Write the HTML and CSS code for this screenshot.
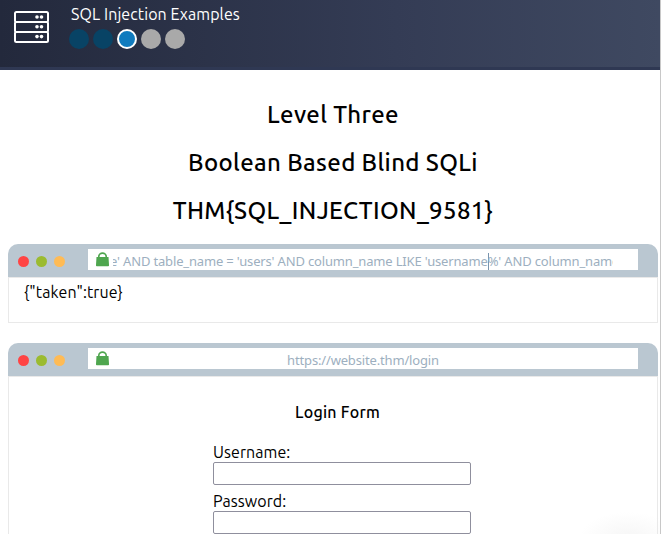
FILE: index.html
```html
<!DOCTYPE html>
<html lang="en">
<head>
<meta charset="utf-8">
<title>SQL Injection Examples</title>
<link rel="stylesheet" href="styles.css">
</head>
<body>
<div class="page">
  <header class="header">
    <svg class="server" width="36" height="34" viewBox="0 0 36 34" fill="none" stroke="#fff" stroke-width="2">
      <rect x="1" y="2" width="33" height="10" rx="1.5"/>
      <rect x="1" y="12" width="33" height="10" rx="1.5"/>
      <rect x="1" y="22" width="33" height="10" rx="1.5"/>
      <g fill="#fff" stroke="none">
        <circle cx="23" cy="7" r="1.8"/><circle cx="27.5" cy="7" r="1.8"/>
        <circle cx="23" cy="16.7" r="1.8"/><circle cx="27.5" cy="16.7" r="1.8"/>
        <circle cx="23" cy="26.6" r="1.8"/><circle cx="27.5" cy="26.6" r="1.8"/>
      </g>
    </svg>
    <div class="progress">
      <div class="title">SQL Injection Examples</div>
      <div class="steps">
        <i class="step done"></i><i class="step done"></i><i class="step current"></i><i class="step"></i><i class="step"></i>
      </div>
    </div>
  </header>
  <main class="main">
    <h1 class="level">Level Three</h1>
    <h1 class="level">Boolean Based Blind SQLi</h1>
    <h1 class="level">THM{SQL_INJECTION_9581}</h1>
    <section class="browser">
      <div class="bar">
        <i class="dot red"></i><i class="dot green"></i><i class="dot amber"></i>
        <div class="address">
          <svg class="lock" width="13" height="15" viewBox="0 0 13 15"><path d="M2.8 6V4.4a3.7 3.3 0 0 1 7.4 0V6" fill="none" stroke="#4fa64f" stroke-width="1.6"/><path d="M.5 5h12l.5 8.5q0 .8-.8.8H.8q-.8 0-.8-.8z" fill="#4fa64f"/></svg>
          <div class="url scrolled"><span class="query">e' AND table_name = 'users' AND column_name LIKE 'username<i class="caret"></i>%' AND column_name</span></div>
        </div>
      </div>
      <div class="body result">{"taken":true}</div>
    </section>
    <section class="browser">
      <div class="bar">
        <i class="dot red"></i><i class="dot green"></i><i class="dot amber"></i>
        <div class="address">
          <svg class="lock" width="13" height="15" viewBox="0 0 13 15"><path d="M2.8 6V4.4a3.7 3.3 0 0 1 7.4 0V6" fill="none" stroke="#4fa64f" stroke-width="1.6"/><path d="M.5 5h12l.5 8.5q0 .8-.8.8H.8q-.8 0-.8-.8z" fill="#4fa64f"/></svg>
          <div class="url">https://website.thm/login</div>
        </div>
      </div>
      <div class="body login">
        <h2 class="form-title">Login Form</h2>
        <form class="form">
          <label for="user">Username:</label>
          <input id="user" type="text">
          <label for="pass">Password:</label>
          <input id="pass" type="password">
        </form>
      </div>
    </section>
  </main>
</div>
</body>
</html>
```
FILE: styles.css
```css
* { box-sizing: border-box; }
html { overflow: hidden; }
body {
  margin: 0;
  height: 534px;
  overflow: hidden;
  background: #fff;
  color: #000;
  font: 16px/20px Ubuntu, "Noto Sans", sans-serif;
}
.page {
  height: 534px;
  overflow: hidden;
  border-right: 1px solid #c8c8c8;
  background: radial-gradient(ellipse 48px 26px at 628px 538px, #f6f6f6, #fff) no-repeat;
}
.header {
  display: flex;
  height: 70px;
  border-bottom: 3px solid #2f3853;
  background: linear-gradient(90deg, #23293c, #343c55 60%, #3f4961);
}
.server { margin: 10px 19px 0 14px; flex: none; }
.progress { padding-top: 4px; }
.title { height: 25px; padding-left: 2px; color: #fff; letter-spacing: 0.09px; white-space: nowrap; }
.steps { display: flex; gap: 4px; }
.step { width: 20px; height: 20px; border-radius: 50%; background: #a9a9a9; }
.step.done { background: #084365; }
.step.current { background: #107bbe; border: 2px solid #fff; }
.main { padding: 21px 2px 0 8px; }
.level { height: 48px; margin: 0; font-size: 24px; line-height: 48px; font-weight: 500; letter-spacing: 0.36px; text-align: center; white-space: nowrap; }
.browser { margin-top: 9px; }
.browser + .browser { margin-top: 20px; }
.bar { display: flex; align-items: center; height: 33px; padding: 0 20px 0 10px; gap: 7px; border-radius: 10px 10px 0 0; background: #bac7d1; }
.dot { width: 11px; height: 11px; margin-top: 2px; border-radius: 50%; }
.red { background: #ff4444; }
.green { background: #9bbb30; }
.amber { background: #ffbb55; }
.address { display: flex; flex: 1; height: 21px; margin: -3px 0 0 16px; padding: 0 25px 0 8px; background: #fff; overflow: hidden; }
.lock { flex: none; margin: 3px 4px 0 0; }
.url { flex: 1; overflow: hidden; color: #9dafc0; font: 13px/24px "Noto Sans", sans-serif; letter-spacing: -0.16px; text-align: center; white-space: nowrap; }
.scrolled { text-align: left; }
.query { margin-left: -3px; }
.caret { display: inline-block; width: 1px; height: 17px; margin-right: -1px; vertical-align: -4px; background: #7894ae; }
.body { border: 1px solid #e9e9e9; }
.result { height: 46px; padding: 4px 15px; letter-spacing: 0.12px; }
.login { height: 220px; padding-top: 25px; }
.form-title { margin: 0; font-size: 16px; line-height: 20px; font-weight: 500; letter-spacing: 0.25px; text-align: center; padding-left: 9px; }
.form { display: flex; flex-direction: column; width: 258px; margin: 20px 0 0 204px; }
.form label { height: 20px; letter-spacing: 0.07px; }
.form input { height: 23px; margin: 0 0 6px; border: 1px solid #8f8f9d; border-radius: 2px; background: #fff; }
```
